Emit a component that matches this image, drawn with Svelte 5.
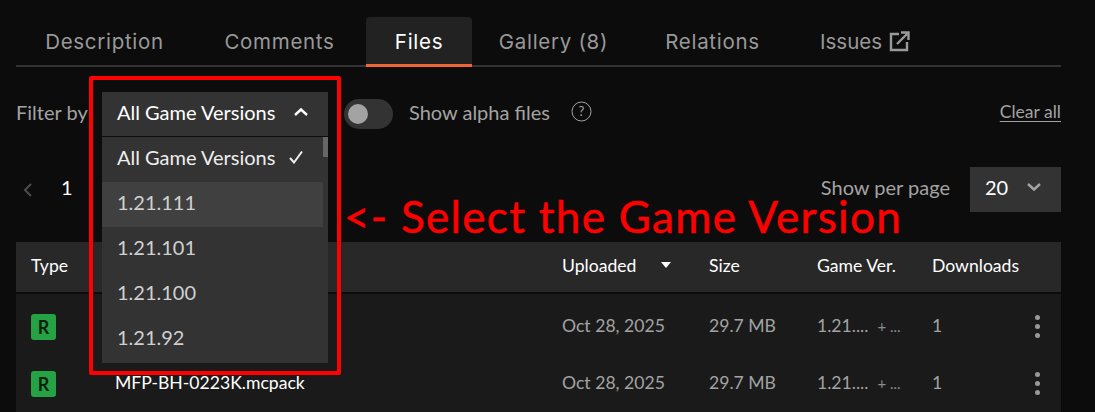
<script>
  const tabs = [
    { label: "Description" },
    { label: "Comments" },
    { label: "Files", active: true },
    { label: "Gallery (8)" },
    { label: "Relations" },
    { label: "Issues", external: true }
  ];
  const versions = ["1.21.111", "1.21.101", "1.21.100", "1.21.92"];
  const rows = [
    { name: "MFP-BH-0223K.mcaddon" },
    { name: "MFP-BH-0223K.mcpack" }
  ];
</script>

<style>
  :global(body) {
    background: #0c0c0c;
    overflow: hidden;
  }

  .page {
    position: relative;
    box-sizing: border-box;
    width: 1095px;
    height: 412px;
    overflow: hidden;
    padding: 17px 34px 0 16px;
    font-family: Lato, "Liberation Sans", sans-serif;
    font-size: 20px;
    color: #a3a3a3;
  }

  .tabs {
    display: grid;
    grid-template-columns: 177px 173px 106px 163px 155px 180px;
    height: 50px;
    box-sizing: border-box;
    border-bottom: 2px solid #333;
  }

  .tab {
    display: flex;
    align-items: center;
    justify-content: center;
    gap: 7px;
    height: 50px;
    box-sizing: border-box;
    padding-top: 2px;
    border-bottom: 3px solid transparent;
    font-family: Inter, "Open Sans", sans-serif;
    font-size: 20.5px;
    letter-spacing: 0.7px;
    color: #999;
  }

  .tab.external {
    justify-content: flex-start;
    padding-left: 30px;
    letter-spacing: 0;
  }

  .tab.active {
    background: #222;
    border-radius: 4px 4px 0 0;
    border-bottom-color: #f16436;
    color: #fff;
  }

  .filters {
    display: flex;
    align-items: center;
    height: 44px;
    margin-top: 25px;
    line-height: 40px;
  }

  .filter-label {
    width: 86px;
    padding-bottom: 5px;
  }

  .select {
    position: relative;
    display: flex;
    align-items: center;
    justify-content: space-between;
    box-sizing: border-box;
    width: 226px;
    height: 44px;
    padding: 0 19px 5px 15px;
    background: #333;
    color: #fff;
  }

  .menu {
    position: absolute;
    left: 0;
    top: 45px;
    width: 226px;
    height: 226px;
    background: #333;
    color: #d0d0d0;
    z-index: 2;
  }

  .menu-item {
    display: flex;
    align-items: center;
    gap: 13px;
    box-sizing: border-box;
    width: 221px;
    height: 45px;
    padding: 0 0 5px 15px;
  }

  .menu-item.selected {
    color: #eee;
  }

  .menu-item.hover {
    background: #404040;
  }

  .scrollbar {
    position: absolute;
    right: 0;
    top: 0;
    width: 5px;
    height: 20px;
    background: #666;
  }

  .toggle {
    display: flex;
    align-items: center;
    box-sizing: border-box;
    width: 49px;
    height: 30px;
    margin-left: 16px;
    padding-left: 4px;
    border-radius: 15px;
    background: #333;
  }

  .knob {
    width: 20px;
    height: 20px;
    border-radius: 50%;
    background: #a3a3a3;
  }

  .alpha {
    margin-left: 16px;
    padding-bottom: 5px;
  }

  .help {
    margin: 0 0 5px 21px;
    display: block;
  }

  .clear {
    margin-left: auto;
    padding-bottom: 4px;
    font-size: 17.5px;
    line-height: 24px;
    text-decoration: underline;
    text-underline-offset: 3px;
  }

  .pager {
    display: flex;
    align-items: center;
    height: 45px;
    margin-top: 31px;
  }

  .prev {
    display: block;
    margin-left: 7px;
  }

  .page-no {
    margin-left: 28px;
    padding-bottom: 5px;
    color: #fff;
  }

  .per-page {
    margin-left: auto;
    margin-right: 20px;
    padding-bottom: 5px;
  }

  .per-select {
    display: flex;
    align-items: center;
    justify-content: space-between;
    box-sizing: border-box;
    width: 91px;
    height: 45px;
    padding: 0 19px 5px 15px;
    background: #333;
    color: #fff;
  }

  .table {
    margin-top: 30px;
  }

  .row {
    display: grid;
    grid-template-columns: 84px 447px 147px 108px 115px 1fr 26px;
    align-items: center;
    padding-left: 15px;
    height: 57px;
    font-size: 17.6px;
  }

  .row.head {
    height: 50px;
    padding-bottom: 4px;
    box-sizing: border-box;
    margin-bottom: 2px;
    background: #282828;
    color: #fff;
  }

  .body {
    height: 120px;
    padding-top: 4px;
    background: #1a1a1a;
  }

  .cell {
    padding-bottom: 2px;
  }

  .sort {
    display: flex;
    align-items: center;
    gap: 25px;
  }

  .badge {
    display: flex;
    align-items: center;
    justify-content: center;
    width: 25px;
    height: 26px;
    margin-top: 1px;
    border-radius: 3px;
    background: #25a244;
    color: #0a1f0f;
    font-weight: 700;
    font-size: 18px;
  }

  .name {
    color: #fff;
  }

  .vers {
    display: flex;
    align-items: center;
    gap: 9px;
  }

  .more {
    font-size: 15px;
    color: #8c8c8c;
  }

  .dots {
    display: flex;
    flex-direction: column;
    gap: 4px;
  }

  .dots i {
    width: 5px;
    height: 5px;
    border-radius: 50%;
    background: #999;
  }

  .callout {
    position: absolute;
    left: 89px;
    top: 76px;
    width: 252px;
    height: 299px;
    box-sizing: border-box;
    border: 4px solid #f00;
    border-radius: 2px;
    z-index: 3;
  }

  .callout-text {
    position: absolute;
    left: 344px;
    top: 190px;
    font-family: Lato, "Liberation Sans", sans-serif;
    font-size: 44px;
    line-height: 52px;
    letter-spacing: 1.3px;
    -webkit-text-stroke: 0.5px #f00;
    color: #f00;
    white-space: nowrap;
    z-index: 3;
  }
</style>

<div class="page">
  <nav class="tabs">
    {#each tabs as tab}
      <div class="tab" class:active={tab.active} class:external={tab.external}>
        {tab.label}
        {#if tab.external}
          <svg width="21" height="21" viewBox="0 0 21 21" fill="none" stroke="#999" stroke-width="2.4">
            <path d="M10 3H2v16h16v-8" />
            <path d="M8 13 19 2M12 1.5h7.5V9" />
          </svg>
        {/if}
      </div>
    {/each}
  </nav>

  <div class="filters">
    <span class="filter-label">Filter by</span>
    <div class="select">
      All Game Versions
      <svg width="16" height="10" viewBox="0 0 16 10" fill="none" stroke="#fff" stroke-width="2.4">
        <path d="M2 8l6-5.5L14 8" />
      </svg>
      <div class="menu">
        <div class="menu-item selected">
          All Game Versions
          <svg width="16" height="14" viewBox="0 0 16 14" fill="none" stroke="#eee" stroke-width="2">
            <path d="M2 8l4 4.5L14 1.5" />
          </svg>
        </div>
        {#each versions as v, i}
          <div class="menu-item" class:hover={i === 0}>{v}</div>
        {/each}
        <div class="scrollbar"></div>
      </div>
    </div>
    <div class="toggle"><div class="knob"></div></div>
    <span class="alpha">Show alpha files</span>
    <svg class="help" width="21" height="21" viewBox="0 0 21 21" fill="none" stroke="#a3a3a3">
      <circle cx="10.5" cy="10.5" r="9.5" />
      <text x="10.5" y="15" text-anchor="middle" font-size="13" fill="#a3a3a3" stroke="none">?</text>
    </svg>
    <span class="clear">Clear all</span>
  </div>

  <div class="pager">
    <svg class="prev" width="10" height="16" viewBox="0 0 10 16" fill="none" stroke="#4d4d4d" stroke-width="2">
      <path d="M8 2 2 8l6 6" />
    </svg>
    <span class="page-no">1</span>
    <span class="per-page">Show per page</span>
    <div class="per-select">
      20
      <svg width="16" height="10" viewBox="0 0 16 10" fill="none" stroke="#a3a3a3" stroke-width="2.4">
        <path d="M2 2l6 5.5L14 2" />
      </svg>
    </div>
  </div>

  <div class="table">
    <div class="row head">
      <span>Type</span>
      <span>Name</span>
      <span class="sort">
        Uploaded
        <svg width="10" height="6" viewBox="0 0 10 6" fill="#fff"><path d="M0 0h10L5 6z" /></svg>
      </span>
      <span>Size</span>
      <span>Game Ver.</span>
      <span>Downloads</span>
      <span></span>
    </div>
    <div class="body">
      {#each rows as row}
        <div class="row">
          <span class="badge">R</span>
          <span class="cell name">{row.name}</span>
          <span class="cell">Oct 28, 2025</span>
          <span class="cell">29.7 MB</span>
          <span class="cell vers">1.21.... <span class="more">+ ...</span></span>
          <span class="cell">1</span>
          <span class="dots"><i></i><i></i><i></i></span>
        </div>
      {/each}
    </div>
  </div>

  <div class="callout"></div>
  <div class="callout-text">&lt;- Select the Game Version</div>
</div>
